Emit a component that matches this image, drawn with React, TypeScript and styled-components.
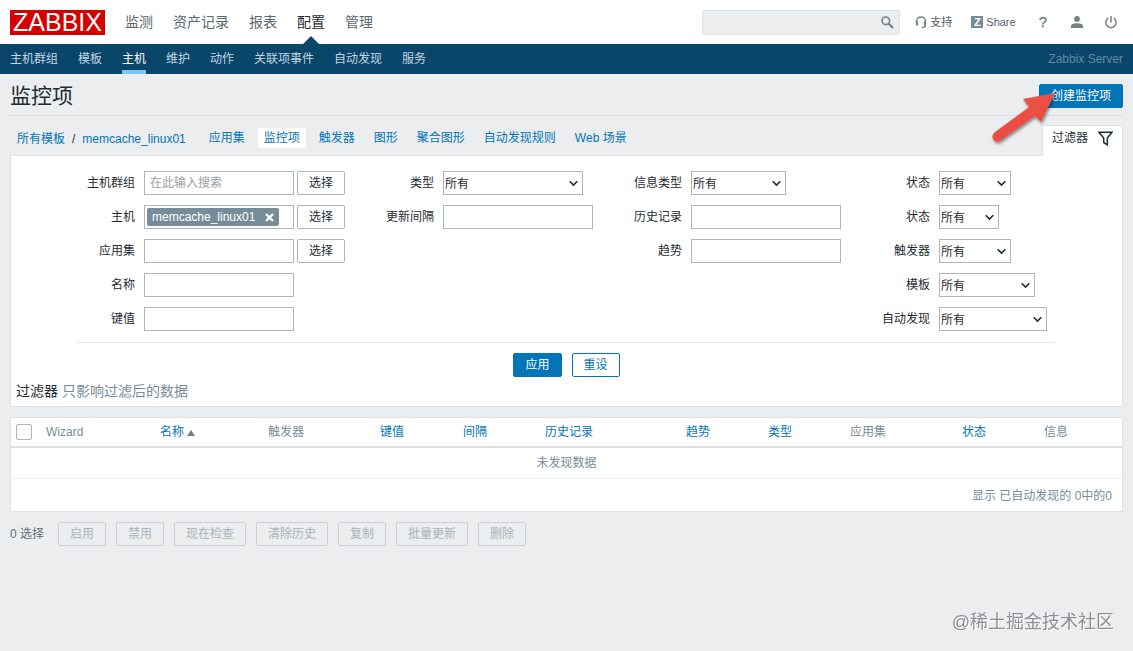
import React from "react";
import styled, { createGlobalStyle, css } from "styled-components";

const GlobalStyle = createGlobalStyle`
  *, *::before, *::after { box-sizing: border-box; }
  body {
    margin: 0;
    background: #ebedef;
    color: #1f2c33;
    font: 12px/18px "Liberation Sans", "Noto Sans CJK SC", sans-serif;
  }
  #root { min-height: 100vh; }
  a { color: #0275b8; text-decoration: none; }
  input, select, button { font: inherit; color: inherit; margin: 0; }
`;

const Header = styled.header`
  display: flex;
  align-items: center;
  height: 44px;
  padding: 0 16px 0 10px;
  background: #fff;
`;

const Logo = styled.a`
  display: flex;
  align-items: center;
  justify-content: center;
  width: 95px;
  height: 25px;
  margin-right: 20px;
  background: #d40000;
  color: #fff;
  font-size: 25px;
  line-height: 25px;
`;

const MainMenu = styled.nav`
  display: flex;
  gap: 20px;
  flex: 1;
`;

const MainLink = styled.a<{ $active?: boolean }>`
  position: relative;
  font-size: 14px;
  line-height: 44px;
  color: ${(p) => (p.$active ? "#1f2c33" : "#5a676e")};
  ${(p) =>
    p.$active &&
    css`
      &::after {
        content: "";
        position: absolute;
        bottom: 0;
        left: 6px;
        border: 8px solid transparent;
        border-top: 0;
        border-bottom-color: #0a466a;
      }
    `}
`;

const Search = styled.form`
  display: flex;
  align-items: center;
  width: 198px;
  height: 25px;
  margin-right: 15px;
  padding-right: 5px;
  background: #ebedee;
  border: 1px solid #dfe3e5;
  border-radius: 2px;
`;

const SearchInput = styled.input`
  flex: 1;
  min-width: 0;
  border: 0;
  background: none;
`;

const IconButton = styled.button`
  display: flex;
  padding: 0;
  border: 0;
  background: none;
`;

const Tools = styled.nav`
  display: flex;
  align-items: center;
`;

const Tool = styled.a<{ $gap?: number }>`
  display: flex;
  align-items: center;
  gap: 3px;
  margin-left: ${(p) => p.$gap ?? 0}px;
  color: #52606a;
  font-size: 11px;
  line-height: 16px;
`;

const ShareBadge = styled.span`
  width: 12px;
  height: 12px;
  background: #768d99;
  color: #fff;
  font-size: 11px;
  font-weight: bold;
  line-height: 12px;
  text-align: center;
`;

const Help = styled.span`
  font-size: 15px;
  color: #6b7a82;
  -webkit-text-stroke: 0.300px #6b7a82;
`;

const SubMenu = styled.nav`
  display: flex;
  gap: 20px;
  height: 30px;
  padding: 0 10px;
  background: #0a466a;
`;

const SubLink = styled.a<{ $active?: boolean }>`
  height: 30px;
  line-height: 30px;
  color: ${(p) => (p.$active ? "#fff" : "#c3d6e2")};
  border-bottom: 4px solid ${(p) => (p.$active ? "#7cc6f2" : "transparent")};
`;

const ServerName = styled.span`
  margin-left: auto;
  line-height: 30px;
  color: #5f8ba5;
`;

const Main = styled.main`
  padding: 0 10px;
`;

const TitleBar = styled.div`
  display: flex;
  align-items: flex-start;
  justify-content: space-between;
  height: 42px;
  border-bottom: 1px solid #dce0e3;
`;

const Title = styled.h1`
  margin: 0;
  font-size: 21px;
  font-weight: normal;
  line-height: 44px;
`;

const CreateWrap = styled.div`
  position: relative;
  padding-top: 10px;
`;

const Pointer = styled.svg`
  position: absolute;
  top: 14px;
  left: -50px;
  pointer-events: none;
`;

const Button = styled.button<{ $kind?: "primary" | "outline" | "plain" }>`
  display: block;
  height: 24px;
  padding: 0 11px;
  border: 1px solid #0275b8;
  border-radius: 2px;
  line-height: 22px;
  white-space: nowrap;
  ${(p) => p.$kind === "primary" && css`background: #0275b8; color: #fff;`}
  ${(p) => p.$kind === "outline" && css`background: #fff; color: #0275b8;`}
  ${(p) => p.$kind === "plain" && css`background: #fff; border-color: #acb5ba;`}
  &:disabled {
    background: #ebedef;
    border-color: #cad0d4;
    color: #aab3b8;
  }
`;

const TabBar = styled.div`
  display: flex;
  align-items: flex-end;
  justify-content: space-between;
  height: 39px;
`;

const Crumbs = styled.nav`
  display: flex;
  height: 20px;
  margin-bottom: 7px;
  padding-left: 7px;
  gap: 7px;
  line-height: 22px;
`;

const Tabs = styled.div`
  display: flex;
  gap: 7px;
  padding-left: 10px;
`;

const Tab = styled.a<{ $active?: boolean }>`
  height: 20px;
  padding: 0 6px;
  line-height: 21px;
  background: ${(p) => (p.$active ? "#fff" : "transparent")};
`;

const FilterToggle = styled.button`
  position: relative;
  z-index: 1;
  display: flex;
  align-items: center;
  gap: 10px;
  height: 31px;
  margin-bottom: -1px;
  padding: 0 9px 6px;
  background: #fff;
  border: 1px solid #dfe3e6;
  border-bottom: 0;
`;

const FilterPanel = styled.form`
  display: flex;
  flex-direction: column;
  align-items: center;
  background: #fff;
  border: 1px solid #dfe3e6;
  padding: 15px 5px 5px;
`;

const Fields = styled.div`
  display: flex;
  gap: 41px;
  padding: 0 8px 11px 9px;
  border-bottom: 1px solid #e6e9eb;
`;

const FieldColumn = styled.div`
  display: grid;
  grid-template-columns: 48px auto;
  grid-auto-rows: 24px;
  align-content: start;
  gap: 10px 9px;
`;

const Label = styled.label`
  line-height: 25px;
  text-align: right;
  white-space: nowrap;
`;

const Controls = styled.div`
  display: flex;
  gap: 3px;
`;

const TextBox = styled.input`
  width: 150px;
  height: 24px;
  padding: 0 5px;
  border: 1px solid #acb5ba;
  background: #fff;
  &::placeholder { color: #9aa1a5; opacity: 1; }
`;

const TagBox = styled.div`
  display: flex;
  width: 150px;
  height: 24px;
  padding: 2px;
  border: 1px solid #acb5ba;
`;

const Tag = styled.span`
  display: flex;
  align-items: center;
  gap: 10px;
  height: 18px;
  padding: 0 5px;
  border-radius: 2px;
  background: #768d99;
  color: #fff;
`;

const TagInput = styled.input`
  flex: 1;
  min-width: 0;
  width: 0;
  padding: 0;
  border: 0;
  outline: 0;
`;

const SelectWrap = styled.div<{ $width: number }>`
  position: relative;
  width: ${(p) => p.$width}px;
  svg {
    position: absolute;
    top: 9px;
    right: 5px;
    pointer-events: none;
  }
`;

const Select = styled.select`
  appearance: none;
  display: block;
  width: 100%;
  height: 24px;
  padding: 1px 0 0 1px;
  border: 1px solid #acb5ba;
  border-radius: 0;
  background: #fff;
`;

const Actions = styled.div`
  display: flex;
  gap: 10px;
  padding: 10px 0 4px;
`;

const FilterNote = styled.p`
  align-self: stretch;
  margin: 0;
  font-size: 14px;
  line-height: 20px;
  color: #768d99;
  strong { font-weight: normal; color: #1f2c33; }
`;

const DataTable = styled.table`
  width: 100%;
  margin-top: 10px;
  table-layout: fixed;
  border-collapse: separate;
  border-spacing: 0;
  background: #fff;
  border: 1px solid #dfe3e6;
  color: #768d99;
`;

const Th = styled.th`
  height: 30px;
  padding: 0 5px;
  border-bottom: 2px solid #dce0e3;
  font-weight: normal;
  line-height: 18px;
  text-align: left;
  white-space: nowrap;
`;

const Td = styled.td<{ $foot?: boolean }>`
  height: ${(p) => (p.$foot ? 32 : 31)}px;
  padding: ${(p) => (p.$foot ? "2px 10px 0" : "0 10px")};
  border-bottom: ${(p) => (p.$foot ? "0" : "1px solid #ebeef0")};
  text-align: ${(p) => (p.$foot ? "right" : "center")};
`;

const CheckBox = styled.input`
  appearance: none;
  display: block;
  width: 16px;
  height: 16px;
  border: 1px solid #acb5ba;
  border-radius: 2px;
  background: #fff;
`;

const SortMark = styled.span`
  display: inline-block;
  margin-left: 3px;
  border: 4px solid transparent;
  border-top: 0;
  border-bottom: 6px solid #768087;
`;

const BulkBar = styled.div`
  display: flex;
  align-items: center;
  gap: 10px;
  padding-top: 10px;
`;

const SelectedCount = styled.span`
  width: 38px;
  white-space: nowrap;
  color: #5f717b;
`;

const Watermark = styled.div`
  position: fixed;
  right: 19px;
  bottom: 16px;
  font-size: 18px;
  line-height: 26px;
  color: #8b8f92;
  text-shadow: 1px 1px 0 #fff;
`;

type Field = { id: string; label: string; width?: number };

const typeFields: Field[] = [
  { id: "type", label: "类型", width: 140 },
  { id: "delay", label: "更新间隔" },
];
const valueFields: Field[] = [
  { id: "value-type", label: "信息类型", width: 95 },
  { id: "history", label: "历史记录" },
  { id: "trends", label: "趋势" },
];
const stateFields: Field[] = [
  { id: "state", label: "状态", width: 72 },
  { id: "status", label: "状态", width: 60 },
  { id: "triggers", label: "触发器", width: 72 },
  { id: "template", label: "模板", width: 96 },
  { id: "discovery", label: "自动发现", width: 108 },
];

const columns: { name: string; width: number; link?: boolean; sorted?: boolean }[] = [
  { name: "Wizard", width: 114 },
  { name: "名称", width: 108, link: true, sorted: true },
  { name: "触发器", width: 112 },
  { name: "键值", width: 83, link: true },
  { name: "间隔", width: 82, link: true },
  { name: "历史记录", width: 141, link: true },
  { name: "趋势", width: 82, link: true },
  { name: "类型", width: 82, link: true },
  { name: "应用集", width: 112 },
  { name: "状态", width: 82, link: true },
  { name: "信息", width: 83 },
];

const FieldGroup = ({ fields }: { fields: Field[] }) => (
  <FieldColumn>
    {fields.map((f) => (
      <React.Fragment key={f.id}>
        <Label htmlFor={f.id}>{f.label}</Label>
        {f.width ? (
          <SelectWrap $width={f.width}>
            <Select id={f.id}>
              <option>所有</option>
            </Select>
            <svg width="9" height="7" viewBox="0 0 9 7" fill="none" stroke="#1f2c33" strokeWidth="1.600">
              <path d="M0.700 1.200 4.500 5 8.300 1.200" />
            </svg>
          </SelectWrap>
        ) : (
          <TextBox id={f.id} />
        )}
      </React.Fragment>
    ))}
  </FieldColumn>
);

export default function App() {
  return (
    <>
      <GlobalStyle />
      <Header>
        <Logo href="#">ZABBIX</Logo>
        <MainMenu>
          {["监测", "资产记录", "报表", "配置", "管理"].map((t) => (
            <MainLink key={t} href="#" $active={t === "配置"}>{t}</MainLink>
          ))}
        </MainMenu>
        <Search>
          <SearchInput aria-label="搜索" />
          <IconButton type="button" aria-label="搜索">
            <svg width="13" height="13" viewBox="0 0 13 13" fill="none" stroke="#768087">
              <circle cx="4.8" cy="4.8" r="3.8" strokeWidth="1.6" />
              <path d="M7.8 7.8 12 12" strokeWidth="2.2" />
            </svg>
          </IconButton>
        </Search>
        <Tools>
          <Tool href="#">
            <svg width="12" height="13" viewBox="0 0 12 13" fill="none" stroke="#768087">
              <path d="M1.500 7.500V5.300a4.500 4.300 0 0 1 9 0V9q0 2.500-3.800 2.700" strokeWidth="1.400" />
              <path d="M2.200 5.500v4M9.800 5.500v4" strokeWidth="2" />
            </svg>
            支持
          </Tool>
          <Tool href="#" $gap={19}><ShareBadge>Z</ShareBadge>Share</Tool>
          <Tool href="#" $gap={23} aria-label="帮助"><Help>?</Help></Tool>
          <Tool href="#" $gap={24} aria-label="用户">
            <svg width="12" height="12" viewBox="0 0 12 12" fill="#768087">
              <circle cx="6" cy="3" r="2.900" />
              <path d="M0 12V10.300C0 8 3 7.300 6 7.300s6 .7 6 3V12z" />
            </svg>
          </Tool>
          <Tool href="#" $gap={22} aria-label="退出">
            <svg width="12" height="13" viewBox="0 0 12 13" fill="none" stroke="#768087" strokeWidth="1.500">
              <path d="M6 0v6.500M3.300 2.200a5.100 5.100 0 1 0 5.400 0" />
            </svg>
          </Tool>
        </Tools>
      </Header>
      <SubMenu>
        {["主机群组", "模板", "主机", "维护", "动作", "关联项事件", "自动发现", "服务"].map((t) => (
          <SubLink key={t} href="#" $active={t === "主机"}>{t}</SubLink>
        ))}
        <ServerName>Zabbix Server</ServerName>
      </SubMenu>
      <Main>
        <TitleBar>
          <Title>监控项</Title>
          <CreateWrap>
            <Button $kind="primary">创建监控项</Button>
            <Pointer width="70" height="60" viewBox="0 0 70 60">
              <defs>
                <linearGradient id="red" x1="0" y1="0" x2="0.600" y2="1">
                  <stop offset="0" stopColor="#f0564a" />
                  <stop offset="1" stopColor="#e64a40" />
                </linearGradient>
                <filter id="shade" x="-20%" y="-20%" width="150%" height="150%">
                  <feDropShadow dx="1" dy="2" stdDeviation="1.500" floodOpacity="0.450" />
                </filter>
              </defs>
              <path
                d="M66 5 34 11 40 19 6 44Q2 47 4 51T11 53L46 28 52 34Z"
                fill="url(#red)"
                filter="url(#shade)"
              />
            </Pointer>
          </CreateWrap>
        </TitleBar>
        <TabBar>
          <Crumbs>
            <a href="#">所有模板</a>
            <span>/</span>
            <a href="#">memcache_linux01</a>
            <Tabs>
              {["应用集", "监控项", "触发器", "图形", "聚合图形", "自动发现规则", "Web 场景"].map((t) => (
                <Tab key={t} href="#" $active={t === "监控项"}>{t}</Tab>
              ))}
            </Tabs>
          </Crumbs>
          <FilterToggle type="button">
            过滤器
            <svg width="15" height="15" viewBox="0 0 15 15" fill="none" stroke="#1f2c33" strokeWidth="1.500">
              <path d="M1 1.200H14L9.300 7V13.800L5.700 11.500V7Z" />
            </svg>
          </FilterToggle>
        </TabBar>
        <FilterPanel>
          <Fields>
            <FieldColumn>
              <Label htmlFor="groups">主机群组</Label>
              <Controls>
                <TextBox id="groups" placeholder="在此输入搜索" />
                <Button type="button" $kind="plain">选择</Button>
              </Controls>
              <Label htmlFor="hosts">主机</Label>
              <Controls>
                <TagBox>
                  <Tag>
                    memcache_linux01
                    <IconButton type="button" aria-label="移除">
                      <svg width="9" height="9" viewBox="0 0 9 9" stroke="#fff" strokeWidth="2.400">
                        <path d="M1 1 8 8M8 1 1 8" />
                      </svg>
                    </IconButton>
                  </Tag>
                  <TagInput id="hosts" />
                </TagBox>
                <Button type="button" $kind="plain">选择</Button>
              </Controls>
              <Label htmlFor="application">应用集</Label>
              <Controls>
                <TextBox id="application" />
                <Button type="button" $kind="plain">选择</Button>
              </Controls>
              <Label htmlFor="name">名称</Label>
              <TextBox id="name" />
              <Label htmlFor="key">键值</Label>
              <TextBox id="key" />
            </FieldColumn>
            <FieldGroup fields={typeFields} />
            <FieldGroup fields={valueFields} />
            <FieldGroup fields={stateFields} />
          </Fields>
          <Actions>
            <Button type="button" $kind="primary">应用</Button>
            <Button type="button" $kind="outline">重设</Button>
          </Actions>
          <FilterNote><strong>过滤器</strong> 只影响过滤后的数据</FilterNote>
        </FilterPanel>
        <DataTable>
          <colgroup>
            <col style={{ width: 30 }} />
            {columns.map((c) => <col key={c.name} style={{ width: c.width }} />)}
          </colgroup>
          <thead>
            <tr>
              <Th><CheckBox type="checkbox" aria-label="全选" /></Th>
              {columns.map((c) => (
                <Th key={c.name}>
                  {c.link ? <a href="#">{c.name}{c.sorted && <SortMark />}</a> : c.name}
                </Th>
              ))}
            </tr>
          </thead>
          <tbody>
            <tr><Td colSpan={12}>未发现数据</Td></tr>
          </tbody>
          <tfoot>
            <tr><Td $foot colSpan={12}>显示 已自动发现的 0中的0</Td></tr>
          </tfoot>
        </DataTable>
        <BulkBar>
          <SelectedCount>0 选择</SelectedCount>
          {["启用", "禁用", "现在检查", "清除历史", "复制", "批量更新", "删除"].map((t) => (
            <Button key={t} type="button" disabled>{t}</Button>
          ))}
        </BulkBar>
      </Main>
      <Watermark>@稀土掘金技术社区</Watermark>
    </>
  );
}
